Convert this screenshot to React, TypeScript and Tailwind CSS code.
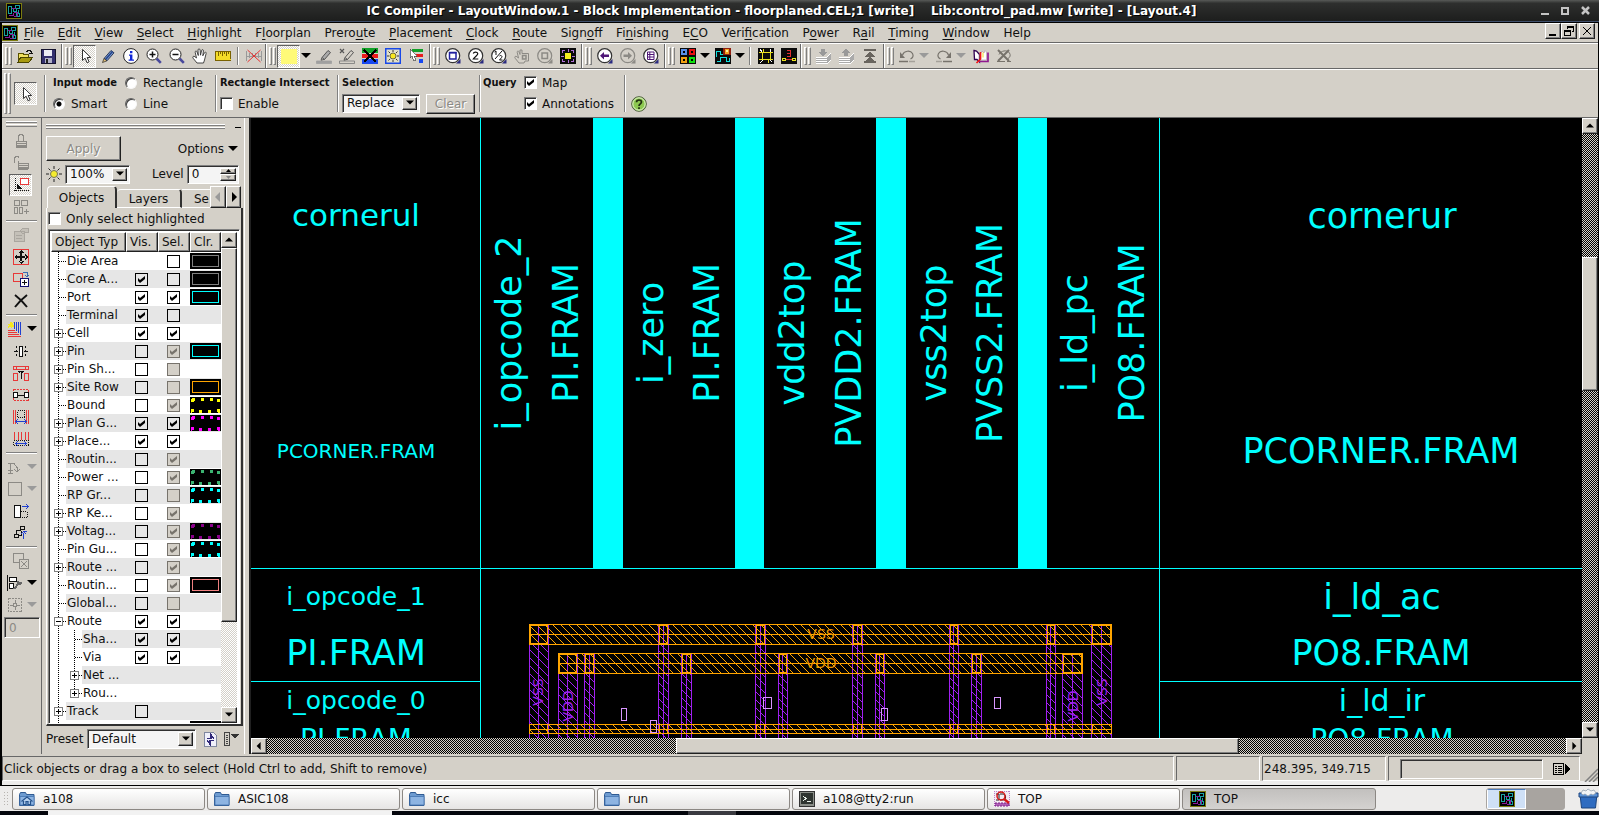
import React, { useId } from "react";

type Kids = { children?: React.ReactNode };

const raised =
  "border border-t-white border-l-white border-r-[#202020] border-b-[#202020] shadow-[inset_-1px_-1px_0_#808080] bg-[#d4d0c8]";
const sunken =
  "border border-t-[#808080] border-l-[#808080] border-r-white border-b-white shadow-[inset_1px_1px_0_#303030]";
const dither = "bg-[repeating-conic-gradient(#fff_0%_25%,#d4d0c8_0%_50%)] bg-[length:2px_2px]";
const darkDither = "bg-[repeating-conic-gradient(#000_0%_25%,#d4d0c8_0%_50%)] bg-[length:2px_2px]";
const pressed = "border border-t-[#606060] border-l-[#606060] border-r-white border-b-white";

const GREY = "#8c8a85";

function Ico({ children, soft }: Kids & { soft?: boolean }) {
  return (
    <svg
      viewBox="0 0 16 16"
      className="block h-4 w-4 shrink-0"
      shapeRendering={soft ? "auto" : "crispEdges"}
      fill="none"
      aria-hidden="true"
    >
      {children}
    </svg>
  );
}

function Tri({ dir = "down", color = "#000", small }: { dir?: "down" | "up" | "left" | "right"; color?: string; small?: boolean }) {
  const d = { down: "M0 2h10L5 7z", up: "M0 7h10L5 2z", left: "M7 0v10L2 5z", right: "M3 0v10l5-5z" }[dir];
  return (
    <svg viewBox="0 0 10 10" className={small ? "block h-[8px] w-[8px]" : "block h-[10px] w-[10px]"} fill={color} aria-hidden="true">
      <path d={d} />
    </svg>
  );
}

function ChipIcon() {
  return (
    <Ico>
      <path d="M0 0h16v16H0z" fill="#7c7c10" />
      <path d="M1 1h14v14H1z" fill="#000" />
      <path d="M2.500 3.500h3v7h-3zM9.500 2.500h4v3h-4zM7.500 5.500h3v3h-3zM12.500 6.500v3h-3M10.500 10.500h3v3h-3z" stroke="#18a0a0" />
      <path d="M5.500 5.500h4M7.500 9.500h4v3M3 12.500h4v-3M7.500 13.500h3" stroke="#8a1a9a" />
    </Ico>
  );
}

/* ---------- toolbar glyphs ---------- */

const CursorI = () => (
  <Ico soft>
    <path d="M5.500 1.500v11l2.600-2.300 2 4.600 2-1-2-4.300h3.600z" fill="#fff" stroke="#333" />
  </Ico>
);
const OpenI = () => (
  <Ico>
    <path d="M1 5h5v1h5v8H1z" fill="#f0e060" stroke="#5a5200" />
    <path d="M4 9h12l-4 5H1z" fill="#a89a10" stroke="#4a4400" />
    <path d="M9 3.500h1v-1h3v1h1v2M12 5.500h4" stroke="#111" />
  </Ico>
);
const SaveI = () => (
  <Ico>
    <path d="M1 1h14v14H1z" fill="#34306e" stroke="#15132e" />
    <path d="M4 2h8v6H4z" fill="#ececf4" />
    <path d="M5 10h7v5H5z" fill="#b0b0c8" />
    <path d="M6 11h2v4H6z" fill="#222" />
  </Ico>
);
const PencilI = () => (
  <Ico soft>
    <path d="M4 10.500l7-8 3 2.300-7 8z" fill="#7c9cd0" stroke="#1c2c50" strokeWidth=".9" />
    <path d="M5.500 11.500l7-8" stroke="#24448c" strokeWidth="1.500" />
    <path d="M4 10.500L2.500 14.500l4.500-1.700z" fill="#e6c27a" stroke="#222" strokeWidth=".7" />
  </Ico>
);
const InfoI = () => (
  <Ico soft>
    <circle cx="8" cy="8" r="7.400" fill="#fff" stroke="#222" />
    <path d="M7 3h2.400v2.200H7zM6 6.500h3.400v5H11v1.300H5.600v-1.300H7V7.800H6z" fill="#1026d8" />
  </Ico>
);
function Lens({ children, c = "#222", fill = "#fff", handle = "#4a4a9c" }: Kids & { c?: string; fill?: string; handle?: string }) {
  return (
    <Ico soft>
      <path d="M10.500 10.500l4.300 4.300" stroke={handle} strokeWidth="2.600" />
      <circle cx="6.500" cy="6.500" r="5.500" fill={fill} stroke={c} />
      {children}
    </Ico>
  );
}
function BigLens({ children, c = "#333", fill = "#fff", handle = "#2a2a80" }: Kids & { c?: string; fill?: string; handle?: string }) {
  return (
    <Ico soft>
      <path d="M11 15.500h4.500V11z" fill={handle} />
      <circle cx="7.700" cy="7.700" r="7" fill={fill} stroke={c} strokeWidth="1.200" />
      {children}
    </Ico>
  );
}
const HandI = ({ c = "#333", fill = "#fff" }: { c?: string; fill?: string }) => (
  <Ico soft>
    <path
      d="M5 15L1.200 10.300c-1.200-1.500.5-2.800 1.700-1.600L4.500 10 3.200 4.300c-.3-1.400 1.400-1.800 1.800-.5L6.300 7.500 6 2c0-1.500 2-1.500 2.100 0L8.500 7.200l1.100-4.700c.3-1.400 2-1 1.800.4L10.800 7.800l1.600-3c.7-1.300 2.200-.5 1.700.8L12.500 12 11.500 15z"
      fill={fill}
      stroke={c}
      strokeWidth=".9"
    />
  </Ico>
);
const RulerI = () => (
  <Ico>
    <path d="M0 3h16v10h-2v-1h-2v1H0z" fill="#f4dc28" />
    <path d="M0 12.500h16M.5 3v10M15.500 3v8M0 3.500h16M3.500 4v4M5.500 4v2M7.500 4v4M9.500 4v2M11.500 4v4M13.500 4v2" stroke="#7a6200" />
  </Ico>
);
const RulerOffI = () => (
  <Ico soft>
    <path d="M.5 3v10M3.500 5v5M6.500 5v5M9.500 5v5M12.500 5v5M15.500 3v10M1 8.500h14" stroke="#999" />
    <path d="M1.500 2l13 12M14.500 2l-13 12" stroke="#e83030" />
  </Ico>
);
const MarkI = ({ x }: { x?: boolean }) => (
  <Ico soft>
    <path d="M6 9.500l6-7 2.500 2-6 7z" fill={x ? "none" : "#aaa"} stroke="#555" />
    <path d="M6 9.500l-1 2.800 3.500-1" stroke="#555" />
    <path d="M.5 13h15v2.500H.5z" fill={x ? "none" : "#a0a0a0"} stroke={x ? "#777" : "#a0a0a0"} strokeWidth=".8" />
    {x && <path d="M1 1l4 4M5 1L1 5" stroke="#555" strokeWidth="1.200" />}
  </Ico>
);
const StripesXI = () => (
  <Ico>
    <path d="M0 0h16v5H0z" fill="#12a028" />
    <path d="M0 6h16v4H0z" fill="#e81c1c" />
    <path d="M0 11h16v5H0z" fill="#1848f0" />
    <path d="M2 2l12 12M14 2L2 14" stroke="#000" strokeWidth="2" />
  </Ico>
);
const SunBoxI = () => (
  <Ico soft>
    <path d="M.75.75h14.500v14.500H.75z" stroke="#1848e8" strokeWidth="1.500" fill="#e2e0c8" />
    <path d="M8 2v2M8 12v2M2 8h2M12 8h2M3.500 3.500l1.500 1.500M11 11l1.500 1.500M12.500 3.500L11 5M5 11l-1.500 1.500" stroke="#333" />
    <circle cx="8" cy="8" r="3" fill="#f8e820" stroke="#333" strokeWidth=".7" />
  </Ico>
);
const StripesCursorI = () => (
  <Ico>
    <path d="M4 1h11v3H4z" fill="#12a028" />
    <path d="M8 6h7v3H8z" fill="#e81c1c" />
    <path d="M11 11h4v4h-4z" fill="#1848f0" />
    <path d="M2 1v9l2-2 2 5 2-1-2-4h3z" fill="#fff" stroke="#444" strokeWidth=".7" />
  </Ico>
);
const FullFitI = () => (
  <Ico>
    <path d="M0 0h16v16H0z" fill="#0a0a0a" />
    <path d="M2.500 5v-2.500H5M11 2.500h2.500V5M13.500 11v2.500H11M5 13.500H2.500V11M8.500 1v3M8.500 12v3M1 8.500h3M12 8.500h3" stroke="#b070d8" />
    <path d="M5 5h6v6H5z" fill="#f4ec20" />
  </Ico>
);
const GridColorI = () => (
  <Ico>
    <path d="M0 0h16v16H0z" fill="#0a0a0a" />
    <path d="M1 1h6v6H1z" fill="#5890e8" />
    <path d="M9 1h6v6H9z" fill="#e81010" />
    <path d="M1 9h6v6H1z" fill="#f0a010" />
    <path d="M9 9h6v6H9z" fill="#10e010" />
    <path d="M3 3h2v2H3zM11 3h2v2h-2zM3 11h2v2H3zM11 11h2v2h-2z" fill="#000" />
  </Ico>
);
const RouteColorI = () => (
  <Ico>
    <path d="M0 0h16v16H0z" fill="#0a0a0a" />
    <path d="M1.500 9V3.500h4v3h3M1.500 13.500h4v-4h6v4h3v-4" stroke="#10e0e0" />
    <path d="M8 0h8v7H8z" fill="#902010" />
    <path d="M10 1h4v5h-4z" fill="#f0a020" />
    <path d="M11 2h2v2h-2z" fill="#fff4a0" />
  </Ico>
);
const VerifyAI = () => (
  <Ico>
    <path d="M0 0h16v16H0z" fill="#0a0a0a" />
    <path d="M1 4.500h3v7H1M15 4.500h-3v7h3M4 4.500h8M4 11.500h8M5.500 1v3M10.500 12v3" stroke="#e8e020" />
    <path d="M2 1l2 3M13 1l-1 3M2 15l3-3M14 14l-2-2" stroke="#fff" />
  </Ico>
);
const VerifyBI = () => (
  <Ico>
    <path d="M0 0h16v16H0z" fill="#0a0a0a" />
    <path d="M6 2.500h3v6H6M6 5.500h3" stroke="#e03030" />
    <path d="M4 11.500h8" stroke="#e03030" />
    <path d="M1.500 10.500h3v2h-3zM11.500 10.500h3v2h-3z" stroke="#e8e020" />
  </Ico>
);
const LayersI = ({ up }: { up?: boolean }) => (
  <Ico>
    <path d="M0 9.500h11l4-4M0 11.500h11l4-4M0 13.500h11l4-4M0 15.500h11l4-4" stroke="#fff" />
    <path d="M0 10.500h11l4-4M0 12.500h11l4-4M0 14.500h11l4-4" stroke="#aaa" />
    <path d={up ? "M5 8V5H2l5-4 5 4H9v3z" : "M5 1h4v3h3L7 8 2 4h3z"} fill="#999" />
  </Ico>
);
const TopI = () => (
  <Ico>
    <path d="M2 1h12v2H2zM2 9l6-5 6 5zM2 14l6-5 6 5zM2 13h12v2H2z" fill="#68645e" />
  </Ico>
);
const UndoI = ({ flip }: { flip?: boolean }) => (
  <svg viewBox="0 0 16 16" className={flip ? "block h-4 w-4 -scale-x-100" : "block h-4 w-4"} fill="none" aria-hidden="true">
    <path d="M3.500 7c1.500-4.500 8-5 10-1.500 1.300 2.300.3 4.500-2 5.500" stroke="#77736c" strokeWidth="1.200" />
    <path d="M1 4v6h5z" fill="#77736c" />
    <path d="M0 13.500h9M10.500 13.500h1M12.500 13.500h1M14.500 13.500h1" stroke="#77736c" strokeWidth="1.500" />
  </svg>
);
const BookI = () => (
  <Ico soft>
    <path d="M1 2.500l2.500.5 3 3.500V14L4 11.500H1.500z" fill="#fff" stroke="#300050" strokeWidth="1.300" />
    <path d="M7 6.500L9 3l2 2 1-2.500 1.500 1.500v8H7z" fill="#fff" stroke="#b8a8b8" strokeWidth=".8" />
    <path d="M6 13.500h9V4.500" stroke="#901890" strokeWidth="1.700" />
    <path d="M7.500 4v7l-4 4" stroke="#f01818" strokeWidth="1.700" />
    <path d="M10 4.500v5" stroke="#f0e020" />
  </Ico>
);
const UndoOffI = () => (
  <Ico soft>
    <path d="M3 6.500c2-4 8-5 10.500-1.500 1.300 2 .7 4.500-1.500 5.500M1 13.500h8M11 13.500h4" stroke="#77736c" />
    <path d="M2 2l11 11M13 2L2 13" stroke="#77736c" strokeWidth="2" />
  </Ico>
);

/* ---------- bars ---------- */

const Handle = () => (
  <span className="mr-px ml-[2px] flex gap-px self-stretch py-[3px]">
    <i className="w-[3px] border border-t-white border-l-white border-r-[#808080] border-b-[#808080]" />
    <i className="w-[3px] border border-t-white border-l-white border-r-[#808080] border-b-[#808080]" />
  </span>
);
const Group = ({ children, last }: Kids & { last?: boolean }) => (
  <div className={last ? "flex items-center border-l border-white" : "flex items-center border-r border-l border-r-[#686868] border-l-white"}>
    <Handle />
    {children}
  </div>
);
const Tool = ({ children, label, on }: Kids & { label: string; on?: boolean }) => (
  <button
    type="button"
    aria-label={label}
    className={on ? `grid h-[23px] w-[23px] place-items-center ${pressed} ${dither}` : "grid h-[23px] w-[23px] place-items-center"}
  >
    {children}
  </button>
);
const Drop = ({ label, off }: { label: string; off?: boolean }) => (
  <button type="button" aria-label={label} className="grid h-[23px] w-3 place-items-center">
    <Tri color={off ? "#9a9a9a" : "#000"} />
  </button>
);
const Gap = () => <i className="w-[2px]" />;
const Sep = () => <i className="mx-[3px] h-[18px] w-[2px] border-l border-[#808080] border-r border-r-white" />;
const TallSep = () => <i className="my-[5px] w-[2px] self-stretch border-l border-[#808080] border-r border-r-white" />;
const GroupTitle = ({ children }: Kids) => (
  <b className="font-['DejaVu_Sans_Condensed','DejaVu_Sans',sans-serif] text-[11px] whitespace-nowrap">{children}</b>
);

const MENUS: [string, number][] = [
  ["File", 0], ["Edit", 0], ["View", 0], ["Select", 0], ["Highlight", 0], ["Floorplan", 1], ["Preroute", 5],
  ["Placement", 0], ["Clock", 0], ["Route", 0], ["Signoff", 4], ["Finishing", 2], ["ECO", 1], ["Verification", 4],
  ["Power", 1], ["Rail", 1], ["Timing", 0], ["Window", 0], ["Help", -1],
];

function Check({
  label,
  checked,
  grey,
  flat,
  text,
}: {
  label: string;
  checked?: boolean;
  grey?: boolean;
  flat?: "clear" | "grey";
  text?: boolean;
}) {
  const look = flat
    ? flat === "grey"
      ? "border border-[#77736c] bg-[#d4d0c8]"
      : "border border-black bg-transparent"
    : `${sunken} bg-white`;
  return (
    <label className="flex items-center gap-[5px]">
      <span className="grid h-[13px] w-[13px] shrink-0">
        <input
          type="checkbox"
          aria-label={label}
          defaultChecked={checked}
          className={`peer [grid-area:1/1] m-0 h-[13px] w-[13px] appearance-none ${look}`}
        />
        <svg viewBox="0 0 13 13" className="pointer-events-none [grid-area:1/1] hidden h-[13px] w-[13px] peer-checked:block" fill={grey ? "#77736c" : "#000"} aria-hidden="true">
          <path d="M3 5l2 2 5-4v3l-5 4-2-2z" />
        </svg>
      </span>
      {text && label}
    </label>
  );
}

function Radio({ label, checked }: { label: string; checked?: boolean }) {
  return (
    <label className="flex items-center gap-[6px]">
      <input
        type="radio"
        name="input-mode"
        defaultChecked={checked}
        className="m-0 h-3 w-3 appearance-none rounded-full border border-t-[#606060] border-l-[#606060] border-r-[#f8f8f8] border-b-[#f8f8f8] bg-white shadow-[inset_1px_1px_0_#404040] checked:bg-[radial-gradient(circle,#000_0_2px,#fff_3px)]"
      />
      {label}
    </label>
  );
}

function Combo({ label, value, className }: { label: string; value: string; className: string }) {
  return (
    <span className={`grid bg-[#f4f4f4] p-[2px] ${sunken} ${className}`}>
      <select aria-label={label} defaultValue={value} className="[grid-area:1/1] w-full min-w-0 appearance-none bg-transparent pl-[2px] leading-none outline-none">
        <option>{value}</option>
      </select>
      <span className={`pointer-events-none [grid-area:1/1] grid w-[15px] place-items-center justify-self-end ${raised}`}>
        <Tri small />
      </span>
    </span>
  );
}

function ToolRows() {
  return (
    <>
      <div className="flex h-[26px] border-t border-b border-t-white border-b-[#686868]">
        <Group>
          <Tool label="Open"><OpenI /></Tool>
          <Tool label="Save"><SaveI /></Tool>
          <Gap />
        </Group>
        <Group>
          <Tool label="Selection tool" on><CursorI /></Tool>
          <Tool label="Edit tool"><PencilI /></Tool>
          <Tool label="Query tool"><InfoI /></Tool>
          <Tool label="Zoom in"><Lens><path d="M3.500 6.500h6M6.500 3.500v6" stroke="#111" strokeWidth="1.500" /></Lens></Tool>
          <Tool label="Zoom out"><Lens><path d="M3.500 6.500h6" stroke="#111" strokeWidth="1.500" /></Lens></Tool>
          <Tool label="Pan"><HandI /></Tool>
          <Tool label="Ruler"><RulerI /></Tool>
          <Sep />
          <Tool label="Clear rulers"><RulerOffI /></Tool>
        </Group>
        <Group>
          <Tool label="Highlight color" on><span className="h-[15px] w-4 bg-[#fffa78]" /></Tool>
          <Drop label="Choose color" />
          <Tool label="Highlight selected"><MarkI /></Tool>
          <Tool label="Clear highlight"><MarkI x /></Tool>
          <Tool label="Clear all highlights"><StripesXI /></Tool>
          <Tool label="Brightness"><SunBoxI /></Tool>
          <Tool label="Select highlighted"><StripesCursorI /></Tool>
          <Gap />
        </Group>
        <Group>
          <Tool label="Zoom fit"><BigLens><path d="M4.500 4.500h6.500v6.500H4.500z" stroke="#2020a0" strokeWidth="1.500" /><path d="M4 4h7.500v1.500H4z" fill="#2020a0" /></BigLens></Tool>
          <Tool label="Zoom out 2x"><BigLens><path d="M5.300 5.500c.5-2 4.500-2 4.500.3 0 1.500-3 3-4.500 5.200h5" stroke="#111" strokeWidth="1.200" /></BigLens></Tool>
          <Tool label="Zoom in 2x"><BigLens><path d="M3.500 4l1.500-1v4M11 3l-7 8M8.500 8c1-1.300 3.500 0 2 1.700L8.500 12h3" stroke="#111" /></BigLens></Tool>
          <Tool label="Pan to selection">
            <Ico soft>
              <path d="M5 15L1.200 10.300c-1.200-1.500.5-2.800 1.700-1.600L4.500 10 3.200 4.300c-.3-1.400 1.400-1.800 1.800-.5L6 6.500V2h2v3.500h6.500V13H11l-1 2z" stroke={GREY} />
              <path d="M8.500 7.500h3.500v3.500H8.500z" stroke={GREY} strokeWidth="1.500" />
            </Ico>
          </Tool>
          <Tool label="Zoom to selection"><BigLens c={GREY} fill="none" handle={GREY}><path d="M5 5h5.500v5.500H5z" stroke={GREY} strokeWidth="1.500" /></BigLens></Tool>
          <Tool label="Full view"><FullFitI /></Tool>
          <Gap />
        </Group>
        <Group>
          <Tool label="Previous view"><BigLens><path d="M3 7.700l4-3.700v2.500h5v2.400H7v2.500z" fill="#501878" /></BigLens></Tool>
          <Tool label="Next view"><BigLens c={GREY} fill="none" handle={GREY}><path d="M12 7.700L8 4v2.500H3.500v2.400H8v2.500z" fill={GREY} /></BigLens></Tool>
          <Tool label="View list"><BigLens><path d="M4.500 4h6.500v7.500H4.500zM4.500 6.500H11M4.500 9H11M6.800 4v7.500" stroke="#501878" /></BigLens></Tool>
          <Gap />
        </Group>
        <Group>
          <Tool label="Visual mode"><GridColorI /></Tool>
          <Drop label="Visual mode menu" />
          <Tool label="Map mode"><RouteColorI /></Tool>
          <Drop label="Map mode menu" />
          <Sep />
          <Tool label="Errors"><VerifyAI /></Tool>
          <Tool label="Hierarchy"><VerifyBI /></Tool>
        </Group>
        <Group>
          <Tool label="Push down"><LayersI /></Tool>
          <Tool label="Pop up"><LayersI up /></Tool>
          <Tool label="Top level"><TopI /></Tool>
          <Gap />
        </Group>
        <Group last>
          <Tool label="Undo"><UndoI /></Tool>
          <Drop label="Undo list" off />
          <Gap />
          <Tool label="Redo"><UndoI flip /></Tool>
          <Drop label="Redo list" off />
          <Gap />
          <Tool label="Report"><BookI /></Tool>
          <Tool label="Clear undo"><UndoOffI /></Tool>
        </Group>
      </div>

      <div className="flex h-[49px] border-t border-b border-t-white border-b-[#686868]">
        <Handle />
        <span className="ml-[2px] flex items-center">
          <Tool label="Selection tool options" on><CursorI /></Tool>
        </span>
        <span className="ml-[7px] flex"><TallSep /></span>
        <div className="ml-[7px] grid grid-cols-[72px_90px] grid-rows-[21px_21px] items-center pt-[2px]">
          <GroupTitle>Input mode</GroupTitle>
          <Radio label="Rectangle" />
          <Radio label="Smart" checked />
          <Radio label="Line" />
        </div>
        <TallSep />
        <div className="ml-[3px] grid w-[117px] grid-rows-[21px_21px] items-center pt-[2px]">
          <GroupTitle>Rectangle Intersect</GroupTitle>
          <Check label="Enable" text />
        </div>
        <TallSep />
        <div className="ml-[3px] grid w-[137px] grid-rows-[21px_21px] items-center pt-[2px]">
          <GroupTitle>Selection</GroupTitle>
          <span className="flex gap-[6px]">
            <Combo label="Selection mode" value="Replace" className="h-[19px] w-[78px]" />
            <button type="button" className={`h-5 w-[49px] text-[#8c8a85] [text-shadow:1px_1px_0_#fff] ${raised}`}>Clear</button>
          </span>
        </div>
        <TallSep />
        <div className="ml-[2px] grid w-[141px] grid-cols-[41px_1fr] grid-rows-[21px_21px] items-center pt-[2px]">
          <GroupTitle>Query</GroupTitle>
          <Check label="Map" checked text />
          <span />
          <Check label="Annotations" checked text />
        </div>
        <TallSep />
        <button type="button" aria-label="Help" className="mt-[26px] ml-[5px] h-4 w-4">
          <Ico soft>
            <circle cx="8" cy="8" r="7.300" fill="#8cc850" stroke="#4a5a3a" />
            <circle cx="8" cy="8" r="6.200" stroke="#e4f4d0" />
            <path d="M5.500 6.300c0-3 5-3 5-.3C10.500 8 8 7.800 8 10M8 11.300v1.600" stroke="#203010" strokeWidth="1.700" />
          </Ico>
        </button>
      </div>
    </>
  );
}

/* ---------- left edit strip ---------- */

const R = "#e83838";
const B = "#2040d0";
const K = "#111";

type Side = { label: string; icon: React.ReactNode; drop?: "on" | "off"; on?: boolean } | null;
const SIDE: Side[] = [
  { label: "Lock", icon: <Ico><path d="M5.500 8V2.500h1v-1h3v1h1V8M3 8.500h10v5H3zM3 10.500h10M3 12h11M3 14.500h11" stroke={GREY} /></Ico> },
  { label: "Unlock", icon: <Ico><path d="M1.500 8V2.500h1v-1h3v1M5.500 8V6M5 8.500h10v5H5zM5 10.500h10M5 12h10M5 14.500h10" stroke={GREY} /></Ico> },
  { label: "Snap", on: true, icon: <Ico><path d="M2.500 1v14M1 13.500h15" stroke={K} strokeDasharray="1 1" /><path d="M7.500 1.500h8v6h-8z" fill="#fff" stroke={R} strokeWidth="1.500" /><path d="M4 7v5h5z" fill={K} /></Ico> },
  { label: "Align grid", icon: <Ico><path d="M1.500 1.500h5v5h-5zM8.500 1.500h6v5h-6zM1.500 8.500h3v6h-3zM6.500 8.500h3v6h-3zM11 12.500h5M13.500 10v5" stroke={GREY} /></Ico> },
  null,
  { label: "Properties", icon: <Ico><path d="M1.500 4.500h10v10h-10zM3 8.500h6M3 11.500h6M7 4l3-3h5v4h-3l-2 2z" stroke="#aaa69f" fill="#c4c0b8" /></Ico> },
  { label: "Move", icon: <Ico><path d="M.5.5h15v15H.5z" stroke={R} /><path d="M8 1l3 3H5zM8 15l3-3H5zM1 8l3-3v6zM15 8l-3-3v6zM7 3h2v10H7zM3 7h10v2H3z" fill={K} /></Ico> },
  { label: "Copy", icon: <Ico><path d="M.5 2.500h9v8h-9z" stroke={R} /><path d="M7.500 7.500h8v8h-8z" fill="#fff" stroke="#101070" /><path d="M9 11.500h5M11.500 9v5" stroke={K} /><path d="M10 1.500h4v4M12 4l2 2 2-2" stroke="#3a6ab0" /></Ico> },
  { label: "Delete", icon: <Ico soft><path d="M2 2c4 3 8 7 12 12M14 2C10 5 6 9 2 14" stroke={K} strokeWidth="2" /></Ico> },
  null,
  { label: "Create route", drop: "on", icon: <Ico><path d="M7.500 1v7M9.500 1v9M11.500 1v11M13.500 1v13" stroke={B} /><path d="M1 9.500h7M1 11.500h9M1 13.500h11M1 15.500h13" stroke={R} /><path d="M4 0l1 2 2-1-1 3 2 1-3 1v2L3 6 1 7l1-3-2-1h3z" fill="#f4e820" /></Ico> },
  { label: "Stretch", icon: <Ico><path d="M6.500 3.500h3v10h-3z" stroke={K} fill="#fff" /><path d="M3.500 3v2M3.500 7v2M3.500 11v2M12.500 3v2M12.500 7v2M12.500 11v2M1 8.500h4M11 8.500h4" stroke={K} /></Ico> },
  { label: "Split", icon: <Ico><path d="M.5 1.500h15v3H.5zM3.500 1v3M12.500 1v3M.5 8.500h4v7h-4zM11.500 8.500h4v7h-4z" stroke={R} strokeWidth="1.300" /><path d="M5 6.500h6M8 6v8M6 8l2-2 2 2" stroke={K} /></Ico> },
  { label: "Space", icon: <Ico><path d="M.5 2.500h15v11H.5z" stroke={R} strokeDasharray="2 1" /><path d="M.5 5.500h4v5h-4zM11.500 5.500h4v5h-4z" fill="#fff" stroke={K} /><path d="M5 8.500h6" stroke={K} /></Ico> },
  { label: "Spread", icon: <Ico><path d="M.5 1v14M2.500 1v14M13.500 1v14M15.500 1v14" stroke={R} /><path d="M4.500 1.500h7v7h-7z" stroke={K} strokeDasharray="1 1" /><path d="M3 12.500h10M5 10l-2 2.500L5 15M11 10l2 2.500L11 15" stroke={B} /></Ico> },
  { label: "Distribute", icon: <Ico><path d="M1.500 1v8M5 1v8M8.500 1v8M12 1v8M15 1v8" stroke={R} /><path d="M.5 9.500h15v5H.5z" stroke={K} strokeDasharray="1 1" /><path d="M3 12.500h10M5 10l-2 2.500L5 15M11 10l2 2.500L11 15" stroke={B} /></Ico> },
  null,
  { label: "Rotate", drop: "off", icon: <Ico><path d="M1 4.500h6l3 4v4M1 11.500h5M1 14.500h5M7 10l3 3 3-3M3.500 5v9" stroke={GREY} /></Ico> },
  { label: "Shape", drop: "off", icon: <Ico><path d="M1.500 1.500h13v13h-13z" stroke={GREY} /></Ico> },
  { label: "Resize", icon: <Ico><path d="M1.500 2.500h6v12h-6z" fill="#fff" stroke={K} /><path d="M8 8.500h6v6H8" stroke={K} strokeDasharray="1 1" /><path d="M9 3.500h6M13 1l2.500 2.500L13 6" stroke={B} /></Ico> },
  { label: "Reshape", icon: <Ico><path d="M7.500 1.500h4v3h-4zM1.500 9.500h4v3h-4zM3.500 9V5.500h4M5 10.500h3v-5" stroke={K} /><path d="M10.500 14V8M13.500 6.500h-4M8 9l2.500-2.500L13 9" stroke={B} /></Ico> },
  null,
  { label: "Remove overlap", icon: <Ico><path d="M.5.5h10v9H.5z" stroke={GREY} /><path d="M6.500 6.500h9v9h-9z" fill="#d4d0c8" stroke={GREY} /><path d="M8 8l6 6M14 8l-6 6" stroke={GREY} /></Ico> },
  { label: "Align", drop: "on", icon: <Ico><path d="M.5 0v16M2.500 2.500h7v4h-7zM2.500 8.500h4v5h-4z" stroke={K} fill="#fff" /><path d="M7 14l5-6M11 6l1 3 3-1" stroke="#666" strokeWidth="2" /></Ico> },
  { label: "Cluster", drop: "off", icon: <Ico><path d="M1.500 1.500h13v13h-13z" stroke={GREY} strokeDasharray="2 1" /><path d="M6.500 6.500h3v3h-3zM8 3v3M8 10v3M3 8.500h3M10 8.500h3" stroke={GREY} /></Ico> },
];

function SideBar() {
  return (
    <div className="flex w-[40px] shrink-0 flex-col border-r border-[#686868]">
      <span className="mx-1 mt-[3px] mb-[3px] flex h-[6px] flex-col gap-px">
        <i className="h-[2px] border-t border-b border-t-white border-b-[#808080]" />
        <i className="h-[3px] border-t border-b border-t-white border-b-[#808080]" />
      </span>
      {SIDE.map((s, i) =>
        s ? (
          <span key={i} className={s.drop ? "flex h-[22px] items-center gap-px pl-px" : "flex h-[22px] items-center pl-[7px]"}>
            <button
              type="button"
              aria-label={s.label}
              className={
                s.on
                  ? `grid h-[22px] w-[23px] place-items-center ${pressed} ${dither}`
                  : "grid h-[22px] w-[23px] place-items-center"
              }
            >
              {s.icon}
            </button>
            {s.drop && <Tri color={s.drop === "off" ? "#9a9a9a" : "#000"} />}
          </span>
        ) : (
          <i key={i} className="mx-1 my-[2px] h-[2px] border-t border-b border-t-[#808080] border-b-white" />
        ),
      )}
      <input aria-label="Offset" defaultValue="0" disabled className={`mt-px ml-[2px] h-[21px] w-[36px] px-1 text-[#8c8a85] ${sunken}`} />
    </div>
  );
}

/* ---------- object panel ---------- */

type Box = "y" | "n" | "gy" | "gn" | "";
type Row = { n: string; v: Box; s: Box; c?: string; dots?: boolean; t?: "+" | "-"; lv?: number };
const ROWS: Row[] = [
  { n: "Die Area", v: "", s: "n", c: "#808080" },
  { n: "Core A...", v: "y", s: "n", c: "#808080" },
  { n: "Port", v: "y", s: "y", c: "#00ffff" },
  { n: "Terminal", v: "y", s: "n" },
  { n: "Cell", v: "y", s: "y", t: "+" },
  { n: "Pin", v: "n", s: "gy", c: "#00ffff", t: "+" },
  { n: "Pin Sh...", v: "n", s: "gn", t: "+" },
  { n: "Site Row", v: "n", s: "gn", c: "#ffa500", t: "+" },
  { n: "Bound", v: "n", s: "gy", c: "#ffff00", dots: true },
  { n: "Plan G...", v: "y", s: "y", c: "#ff00ff", dots: true, t: "+" },
  { n: "Place...", v: "y", s: "y", t: "+" },
  { n: "Routin...", v: "n", s: "gy" },
  { n: "Power ...", v: "n", s: "gy", c: "#3cb371", dots: true },
  { n: "RP Gr...", v: "n", s: "gn", c: "#00ffff", dots: true },
  { n: "RP Ke...", v: "n", s: "gy", t: "+" },
  { n: "Voltag...", v: "n", s: "gy", c: "#8b008b", dots: true, t: "+" },
  { n: "Pin Gu...", v: "n", s: "gy", c: "#00ffff", dots: true },
  { n: "Route ...", v: "n", s: "gy", t: "+" },
  { n: "Routin...", v: "n", s: "gy", c: "#f08080" },
  { n: "Global...", v: "n", s: "gn" },
  { n: "Route", v: "y", s: "y", t: "-" },
  { n: "Sha...", v: "y", s: "y", lv: 1 },
  { n: "Via", v: "y", s: "y", lv: 1 },
  { n: "Net ...", v: "", s: "", t: "+", lv: 1 },
  { n: "Rou...", v: "", s: "", t: "+", lv: 1 },
  { n: "Track", v: "n", s: "", t: "+" },
];

function Swatch({ c, dots }: { c: string; dots?: boolean }) {
  return (
    <svg viewBox="0 0 31 18" className="block h-[18px] w-[31px]" shapeRendering="crispEdges" fill="none" aria-hidden="true">
      <path d="M0 1h31v16H0z" fill="#000" />
      {dots ? (
        <path d="M1 3h1V2h3v3H4v1H1zM11 2h3v3h-3zM20 2h3v3h-3zM27 3h3v3h-3zM1 13h3v3H2v1H1zM9 14h3v3H9zM18 14h3v3h-3zM27 13h3v4h-2v-1h-1z" fill={c} />
      ) : (
        <path d="M2.500 3.500h26v11h-26z" stroke={c} />
      )}
    </svg>
  );
}

function Branch({ t, lv, last }: { t?: "+" | "-"; lv?: number; last?: boolean }) {
  const x = lv ? 23.5 : 7.5;
  const w = lv ? 31 : 15;
  return (
    <svg viewBox={`0 0 ${w} 18`} width={w} height={18} className="block shrink-0" shapeRendering="crispEdges" fill="none" aria-hidden="true">
      <path d="M7.500 0v18" stroke="#000" strokeDasharray="1 1" />
      {lv && <path d={last ? "M23.500 0v9" : "M23.500 0v18"} stroke="#000" strokeDasharray="1 1" />}
      <path d={`M${x} 9.500h7`} stroke="#000" strokeDasharray="1 1" />
      {t && (
        <>
          <path d={`M${x - 4} 5.500h8v8h-8z`} fill="#fff" stroke="#808080" />
          <path d={t === "+" ? `M${x - 2.5} 9.500h5M${x} 7v5` : `M${x - 2.5} 9.500h5`} stroke="#000" />
        </>
      )}
    </svg>
  );
}

function Cell({ b, name }: { b: Box; name: string }) {
  return (
    <span className="flex h-[18px] items-center justify-center pt-px pr-px">
      {b && <Check label={name} checked={b === "y" || b === "gy"} grey={b === "gy"} flat={b[0] === "g" ? "grey" : "clear"} />}
    </span>
  );
}

function ObjectPanel() {
  const levelId = useId();
  const th = `h-5 overflow-hidden p-0 pl-[3px] text-left font-normal whitespace-nowrap ${raised}`;
  return (
    <div className="flex w-[209px] shrink-0 flex-col border-r-2 border-[#202020] shadow-[inset_-4px_0_0_#d4d0c8,inset_-5px_0_0_#fff]">
      <div className="flex h-[18px] items-start pt-[6px] pl-1">
        <span className="flex w-[179px] flex-col gap-px">
          <i className="h-[2px] border-t border-b border-t-white border-b-[#808080]" />
          <i className="h-[2px] border-t border-b border-t-white border-b-[#808080]" />
        </span>
        <i className="mt-[3px] ml-[10px] h-px w-[6px] bg-black" />
      </div>
      <div className="flex h-[25px] items-center justify-between pr-[11px] pl-1">
        <button type="button" className={`h-[25px] w-[75px] text-[#8c8a85] [text-shadow:1px_1px_0_#fff] ${raised}`}>Apply</button>
        <button type="button" className="flex items-center gap-1">Options <Tri /></button>
      </div>
      <div className="mt-[3px] flex h-5 items-center pl-1">
        <Ico soft>
          <path d="M8 0v3M8 13v3M0 8h3M13 8h3M2.500 2.500l2 2M13.500 2.500l-2 2M2.500 13.500l2-2M13.500 13.500l-2-2" stroke="#222" />
          <circle cx="8" cy="8" r="3.500" fill="#f4ec30" stroke="#555" strokeWidth=".8" />
        </Ico>
        <Combo label="Brightness" value="100%" className="ml-[3px] h-[19px] w-[65px]" />
        <label htmlFor={levelId} className="ml-[22px]">Level</label>
        <span className={`ml-[3px] flex h-[19px] w-[52px] bg-[#f4f4f4] p-[2px] ${sunken}`}>
          <input id={levelId} defaultValue="0" className="w-8 min-w-0 bg-transparent pl-[2px] outline-none" />
          <span className="flex w-4 flex-col">
            <button type="button" aria-label="Level up" className={`grid h-[8px] place-items-center ${raised}`}><svg viewBox="0 0 5 3" className="h-[3px] w-[5px]"><path d="M0 3h5L2.500 0z" /></svg></button>
            <button type="button" aria-label="Level down" className={`grid h-[7px] place-items-center ${raised}`}><svg viewBox="0 0 5 3" className="h-[3px] w-[5px]" fill="#888"><path d="M0 0h5L2.500 3z" /></svg></button>
          </span>
        </span>
      </div>
      <div className="mr-[7px] ml-[5px] flex h-6 items-end pt-[2px]">
        <button type="button" className="h-[22px] w-[70px] rounded-t-sm border-t border-r-2 border-l border-t-white border-r-[#303030] border-l-white">Objects</button>
        <button type="button" className="h-[19px] w-[65px] rounded-t-sm border-t border-r-2 border-b border-t-white border-r-[#303030] border-b-white">Layers</button>
        <button type="button" className="h-[19px] w-[28px] overflow-hidden border-t border-b border-white pl-[12px] text-left">Se</button>
        <button type="button" aria-label="Previous tabs" className={`grid h-[22px] w-4 place-items-center ${raised}`}><Tri dir="left" color="#9a9a9a" /></button>
        <button type="button" aria-label="Next tabs" className={`grid h-[22px] w-[15px] place-items-center ${raised}`}><Tri dir="right" /></button>
      </div>
      <div className="mr-[6px] ml-1 flex min-h-0 flex-1 flex-col border-r-2 border-b-2 border-l border-r-[#303030] border-b-[#303030] border-l-white">
        <div className="flex h-[21px] items-center pl-px">
          <Check label="Only select highlighted" text />
        </div>
        <div className={`mx-px flex min-h-0 flex-1 bg-white pt-[2px] pr-[2px] pl-[2px] ${sunken}`}>
          <div className="w-[170px] overflow-hidden">
            <table className="w-[170px] table-fixed border-separate border-spacing-0">
              <colgroup>
                <col className="w-[75px]" />
                <col className="w-8" />
                <col className="w-8" />
                <col className="w-[31px]" />
              </colgroup>
              <thead>
                <tr>
                  <th className={th}>Object Typ</th>
                  <th className={th}>Vis.</th>
                  <th className={th}>Sel.</th>
                  <th className={th}>Clr.</th>
                </tr>
              </thead>
              <tbody>
                {ROWS.map((r, i) => {
                  const bg = i % 2 ? "bg-[#e6e6e6]" : "";
                  return (
                    <tr key={i} className="h-[18px]">
                      <td className="p-0">
                        <span className="flex h-[18px]">
                          <Branch t={r.t} lv={r.lv} last={i === 24} />
                          <span className={`min-w-0 flex-1 overflow-hidden pl-px leading-[18px] whitespace-nowrap ${bg}`}>{r.n}</span>
                        </span>
                      </td>
                      <td className={`p-0 ${bg}`}><Cell b={r.v} name={`${r.n} visible`} /></td>
                      <td className={`p-0 ${bg}`}><Cell b={r.s} name={`${r.n} selectable`} /></td>
                      <td className={`p-0 ${bg}`}>{r.c && <Swatch c={r.c} dots={r.dots} />}</td>
                    </tr>
                  );
                })}
                <tr>
                  <td className="p-0"><Branch /></td>
                  <td className="p-0" />
                  <td className="p-0" />
                  <td className="p-0"><Swatch c="#808080" /></td>
                </tr>
              </tbody>
            </table>
          </div>
          <div className={`flex w-4 shrink-0 flex-col ${dither}`}>
            <button type="button" aria-label="Scroll up" className={`grid h-4 place-items-center ${raised}`}><Tri dir="up" small /></button>
            <span className={`h-[374px] ${raised}`} />
            <span className="flex-1" />
            <button type="button" aria-label="Scroll down" className={`grid h-4 place-items-center ${raised}`}><Tri small /></button>
          </div>
        </div>
      </div>
      <div className="flex h-[28px] items-center pb-[2px] pl-1">
        <span className="w-[41px]">Preset</span>
        <Combo label="Preset" value="Default" className="h-5 w-[109px]" />
        <button type="button" aria-label="Reload preset" className="ml-[6px]">
          <Ico><path d="M2.500 1.500h9l3 3v11h-12z" fill="#f0f0fa" stroke="#8088a0" /><path d="M5 7.500h4V4l3 3.500M12 9.500H8V13l-3-3.500" stroke="#302878" strokeWidth="1.500" /></Ico>
        </button>
        <button type="button" aria-label="Preset menu" className="ml-[5px] flex items-center">
          <Ico><path d="M1.500 1.500h5v13h-5zM3 4.500h2M3 6.500h2M3 8.500h2M3 10.500h2M3 12.500h2" stroke="#444" /><path d="M8 3h8l-4 5z" fill="#333" /></Ico>
        </button>
      </div>
    </div>
  );
}

/* ---------- layout canvas ---------- */

type Lbl = [string, number, number, number];
const H_LABELS: Lbl[] = [
  ["cornerul", 356, 226, 31],
  ["PCORNER.FRAM", 356, 458, 20],
  ["cornerur", 1382, 228, 35],
  ["PCORNER.FRAM", 1381, 463, 35],
  ["i_opcode_1", 356, 605, 25],
  ["PI.FRAM", 356, 665, 35],
  ["i_opcode_0", 356, 709, 25],
  ["PI.FRAM", 356, 749, 28],
  ["i_ld_ac", 1382, 609, 35],
  ["PO8.FRAM", 1381, 665, 35],
  ["i_ld_ir", 1382, 711, 30],
  ["PO8.FRAM", 1382, 749, 28],
];
const V_LABELS: [string, number][] = [
  ["i_opcode_2", 521], ["PI.FRAM", 578], ["i_zero", 663], ["PI.FRAM", 719], ["vdd2top", 804],
  ["PVDD2.FRAM", 861], ["vss2top", 946], ["PVSS2.FRAM", 1002], ["i_ld_pc", 1087], ["PO8.FRAM", 1144],
];
const PADS: [number, number][] = [[593, 30], [735, 29], [876, 30], [1018, 29]];
const SS_STRAPS: [number, number][] = [[658, 10], [755, 10], [852, 10], [949, 9], [1046, 9]];
const DD_STRAPS: [number, number][] = [[584, 10], [681, 10], [778, 9], [875, 9], [971, 10]];
const CELLS: [number, number, number, number][] = [
  [621, 708, 5, 12], [650, 720, 6, 12], [763, 697, 8, 11], [881, 708, 6, 12], [994, 697, 6, 11],
];

function Metal({ x, y, w, h, color, fill, vert }: { x: number; y: number; w: number; h: number; color: string; fill: string; vert?: boolean }) {
  const mid = vert ? `M${x + Math.floor(w / 2) + 0.5} ${y}v${h}` : `M${x} ${y + Math.ceil(h / 2) + 0.5}h${w}`;
  return (
    <g stroke={color}>
      <rect x={x + 0.5} y={y + 0.5} width={w} height={h} fill={`url(#${fill})`} />
      <path d={mid} />
    </g>
  );
}

function Canvas() {
  const P = "#a020f0";
  const O = "#ffa500";
  return (
    <svg
      viewBox="251 118 1331 620"
      width={1331}
      height={620}
      className="block max-w-none shrink-0"
      shapeRendering="crispEdges"
      fontFamily="'DejaVu Sans', sans-serif"
      textAnchor="middle"
      fill="none"
    >
      <defs>
        <pattern id="hatchO" width="8" height="8" patternUnits="userSpaceOnUse">
          <path d="M0 0h1v1h1v1h1v1h1v1h1v1h1v1h1v1h1v1H7V7H6V6H5V5H4V4H3V3H2V2H1V1H0z" fill={O} />
        </pattern>
        <pattern id="hatchP" width="8" height="8" patternUnits="userSpaceOnUse">
          <path d="M0 0h1v1h1v1h1v1h1v1h1v1h1v1h1v1h1v1H7V7H6V6H5V5H4V4H3V3H2V2H1V1H0z" fill={P} />
        </pattern>
      </defs>
      <g fill="#00ffff">
        {PADS.map(([x, w]) => <rect key={x} x={x} y={118} width={w} height={450} />)}
        <path d="M251 568h1331v1H251zM480 118h1v620h-1zM1159 118h1v620h-1zM251 681h229v1H251zM1159 681h423v1h-423z" />
        {H_LABELS.map(([t, x, y, s], i) => <text key={i} x={x} y={y} fontSize={s}>{t}</text>)}
        {V_LABELS.map(([t, x]) => (
          <text key={x} transform={`translate(${x} 333) rotate(-90)`} fontSize={35}>{t}</text>
        ))}
      </g>

      {[529, 1091].map((x) => <Metal key={x} x={x} y={625} w={x === 529 ? 19 : 20} h={130} color={P} fill="hatchP" vert />)}
      {[558, 1062].map((x) => <Metal key={x} x={x} y={654} w={x === 558 ? 19 : 20} h={100} color={P} fill="hatchP" vert />)}
      {SS_STRAPS.map(([x, w]) => <Metal key={x} x={x} y={625} w={w} h={130} color={P} fill="hatchP" vert />)}
      {DD_STRAPS.map(([x, w]) => <Metal key={x} x={x} y={654} w={w} h={100} color={P} fill="hatchP" vert />)}
      <Metal x={529} y={624} w={582} h={20} color={O} fill="hatchO" />
      <Metal x={558} y={653} w={524} h={20} color={O} fill="hatchO" />
      <Metal x={529} y={724} w={582} h={9} color={O} fill="hatchO" />

      <g stroke={O}>
        <path d="M530.500 625.500h17v18h-17zM1092.500 625.500h18v18h-18zM559.500 654.500h17v18h-17zM1063.500 654.500h18v18h-18z" />
        {SS_STRAPS.map(([x, w]) => <path key={x} d={`M${x + 1.5} 625.500h${w - 2}v18h${2 - w}zM${x + 1.5} 724v9M${x + w - 0.5} 724v9`} />)}
        {DD_STRAPS.map(([x, w]) => <path key={x} d={`M${x + 1.5} 654.500h${w - 2}v18h${2 - w}z`} />)}
        <path d="M547.500 724v9M1092.500 724v9" />
      </g>
      <g stroke="#d896ff">
        {CELLS.map(([x, y, w, h]) => <rect key={x} x={x + 0.5} y={y + 0.5} width={w} height={h} />)}
      </g>
      <g fontSize={14} fill="#f09a00">
        <text x={821} y={639}>VSS</text>
        <text x={821} y={668}>VDD</text>
      </g>
      <g fontSize={14} fill="#a020f0">
        <text transform="translate(543 692) rotate(-90)">VSS</text>
        <text transform="translate(573 706) rotate(-90)">VDD</text>
        <text transform="translate(1078 706) rotate(-90)">VDD</text>
        <text transform="translate(1107 692) rotate(-90)">VSS</text>
      </g>
    </svg>
  );
}

function CanvasArea() {
  return (
    <div className="flex min-w-0 flex-1 flex-col">
      <div className="flex min-h-0 flex-1">
        <div className="min-w-0 flex-1 overflow-hidden bg-black"><Canvas /></div>
        <div className={`flex w-4 shrink-0 flex-col ${darkDither}`}>
          <button type="button" aria-label="Scroll canvas up" className={`grid h-4 place-items-center ${raised}`}><Tri dir="up" small /></button>
          <span className="flex-[123]" />
          <span className={`flex-[133] ${raised}`} />
          <span className="flex-[332]" />
          <button type="button" aria-label="Scroll canvas down" className={`grid h-4 place-items-center ${raised}`}><Tri small /></button>
        </div>
      </div>
      <div className="flex h-4 shrink-0 pr-4">
        <div className={`flex flex-1 ${darkDither}`}>
          <button type="button" aria-label="Scroll canvas left" className={`grid w-4 place-items-center ${raised}`}><Tri dir="left" small /></button>
          <span className="flex-[410]" />
          <span className={`flex-[562] ${raised}`} />
          <span className="flex-[328]" />
          <button type="button" aria-label="Scroll canvas right" className={`grid w-4 place-items-center ${raised}`}><Tri dir="right" small /></button>
        </div>
      </div>
    </div>
  );
}

/* ---------- desktop task bar ---------- */

const FolderI = ({ home }: { home?: boolean }) => (
  <Ico soft>
    <path d="M.5 14.500v-11l1-2h5l1 2h7.500v11z" fill="#6d9bd0" stroke="#2f5a92" />
    <path d="M1 5.500h14V14H1z" fill="#8db4e2" stroke="#4474b0" strokeWidth=".8" />
    {home && <path d="M2.500 10.500L8 6l5.500 4.500M4.500 10v3.500h2.500v-3h2v3h2.500V10" stroke="#24528c" strokeWidth="1.200" fill="#b8d2f0" />}
  </Ico>
);
const TermI = () => (
  <Ico>
    <path d="M.5.5h15v15H.5z" fill="#8a8e88" stroke="#333" />
    <path d="M2 2h12v11H2z" fill="#2e3430" />
    <path d="M4 5l3 2.500L4 10M8 10.500h4" stroke="#e8f0e8" />
  </Ico>
);
const SchemI = () => (
  <Ico soft>
    <path d="M0 0h16v16H0z" fill="#f4eaf4" />
    <path d="M0 .5h16M.5 0v16M15.500 0v16" stroke="#c080c8" strokeDasharray="1 1" />
    <path d="M1 12h14v3H1z" fill="#b060b8" stroke="#7c2088" strokeDasharray="2 1" />
    <path d="M2 3h3v6H2M6 3h3c3.500 0 3.500 6 0 6H6" stroke="#222" />
    <circle cx="7" cy="5" r="4" stroke="#d81818" strokeWidth="1.500" />
    <path d="M10 8l5 4" stroke="#d81818" strokeWidth="2.500" />
  </Ico>
);

const TASKS: [string, React.ReactNode][] = [
  ["a108", <FolderI home />],
  ["ASIC108", <FolderI />],
  ["icc", <FolderI />],
  ["run", <FolderI />],
  ["a108@tty2:run", <TermI />],
  ["TOP", <SchemI />],
  ["TOP", <ChipIcon />],
];

function TaskBar() {
  return (
    <div className="flex h-[25px] shrink-0 items-center bg-[#edeceb] pl-[3px]">
      <span className="mr-1 h-4 w-[5px] bg-[radial-gradient(circle,#b8b4b0_1px,transparent_1px)] bg-[length:3px_3px]" />
      <div className="flex w-[1364px] min-w-0 gap-[2px]">
        {TASKS.map(([t, icon], i) => (
          <button
            key={i}
            type="button"
            className={
              i === 6
                ? "flex h-[22px] flex-1 items-center gap-[8px] rounded-[3px] border border-[#8c8884] bg-linear-to-b from-[#c2c0be] to-[#d4d2d0] pl-[7px]"
                : "flex h-[22px] flex-1 items-center gap-[8px] rounded-[3px] border border-[#8c8884] bg-linear-to-b from-white to-[#e6e5e4] pl-[6px]"
            }
          >
            {icon}
            {t}
          </button>
        ))}
      </div>
      <div className="ml-auto flex h-[22px] w-[79px] overflow-hidden rounded-[3px] border border-[#a8a4a0] bg-[#a8a4a0]">
        <span className="grid w-[39px] place-items-center border border-t-[#4a78b8] border-r-white border-b-white border-l-white bg-[#cfe0f6]"><ChipIcon /></span>
      </div>
      <svg viewBox="0 0 20 22" className="ml-3 block h-[22px] w-[22px] shrink-0" fill="none" aria-hidden="true">
        <path d="M2 6h17l-1.500 14h-14z" fill="#2f6cc0" stroke="#1c447e" />
        <path d="M1 5h19v4H1z" fill="#5a92d8" stroke="#1c447e" />
        <path d="M3 5l2-3 3 1 2-2 3 2 3-1 2 3-3 2-2-1-3 2-3-2-2 1z" fill="#f2f4f6" stroke="#8a98a8" strokeWidth=".7" />
      </svg>
    </div>
  );
}

const WinBtn = ({ d, label }: { d: string; label: string }) => (
  <button type="button" aria-label={label} className={`grid h-4 w-4 place-items-center ${raised}`}>
    <svg viewBox="0 0 10 10" className="block h-[10px] w-[10px]" fill="none" stroke="#000" shapeRendering="crispEdges" aria-hidden="true"><path d={d} /></svg>
  </button>
);

export default function App() {
  return (
    <div className="flex h-screen flex-col overflow-hidden bg-[#d4d0c8] font-['DejaVu_Sans',sans-serif] text-[12px] leading-4 text-[#111]">
      <header className="flex h-[23px] shrink-0 items-center border-b border-black bg-linear-to-b from-[#585a58] via-[#2e2f2e] via-15% to-[#1c1d1c] px-[6px] shadow-[inset_0_-1px_0_#40506c]">
        <ChipIcon />
        <h1 className="flex-1 text-center text-[12px] font-bold whitespace-pre text-white [text-shadow:1px_1px_0_#000]">
          {"IC Compiler - LayoutWindow.1 - Block Implementation - floorplaned.CEL;1 [write]    Lib:control_pad.mw [write] - [Layout.4]"}
        </h1>
        <svg viewBox="0 0 50 10" className="mr-[2px] block h-[10px] w-[50px]" fill="none" stroke="#c4c4c4" strokeWidth="2" shapeRendering="crispEdges" aria-hidden="true">
          <path d="M0 8h8M21 2h6v6h-6z" />
          <path d="M41 1l7 7M48 1l-7 7" shapeRendering="auto" strokeWidth="2.500" />
        </svg>
      </header>

      <div className="flex min-h-0 flex-1 flex-col border-r border-l-2 border-black">
        <nav className="flex h-5 shrink-0 items-center border-b border-[#686868]">
          <ChipIcon />
          <div className="flex w-[1013px] justify-between pl-[6px]">
            {MENUS.map(([m, u]) => (
              <a key={m} href="#" className="whitespace-nowrap">
                {u < 0 ? m : <>{m.slice(0, u)}<span className="underline underline-offset-2">{m[u]}</span>{m.slice(u + 1)}</>}
              </a>
            ))}
          </div>
          <div className="mr-[3px] mb-[3px] ml-auto flex">
            <WinBtn label="Minimize" d="M1 8h7M1 9h7" />
            <WinBtn label="Restore" d="M3.500 3V.5h6v5H8M3 1.500h6M.5 4.500h6v5h-6zM0 5.500h7" />
            <i className="w-[2px]" />
            <WinBtn label="Close" d="M1 1l8 8M9 1L1 9" />
          </div>
        </nav>

        <ToolRows />

        <main className="flex min-h-0 flex-1">
          <SideBar />
          <ObjectPanel />
          <CanvasArea />
        </main>

        <footer className="flex h-[31px] shrink-0 items-start gap-[2px] border-b-4 border-[#edeceb] pt-[2px]">
          <div className="flex h-[25px] flex-1 items-center border border-t-[#686868] border-r-white border-b-white border-l-[#686868] pl-px whitespace-nowrap">
            Click objects or drag a box to select (Hold Ctrl to add, Shift to remove)
          </div>
          <div className="h-[25px] w-[84px] border border-t-[#686868] border-r-white border-b-white border-l-[#686868]" />
          <div className="flex h-[25px] w-[124px] items-center border border-t-[#686868] border-r-white border-b-white border-l-[#686868] pl-px">248.395, 349.715</div>
          <div className="flex h-[25px] w-[192px] items-center border border-t-[#686868] border-r-white border-b-white border-l-[#686868] pl-[11px]">
            <span className={`h-5 w-[143px] ${sunken}`} />
            <button type="button" aria-label="Message list" className="ml-[10px]">
              <svg viewBox="0 0 17 12" className="block h-3 w-[17px]" shapeRendering="crispEdges" fill="none" aria-hidden="true">
                <path d="M.5.5h10v11H.5zM2 3.500h2M5 3.500h4M2 5.500h2M5 5.500h4M2 7.500h2M5 7.500h4M2 9.500h2M5 9.500h4" stroke="#000" />
                <path d="M12 1v10l5-5z" fill="#000" />
              </svg>
            </button>
          </div>
          <svg viewBox="0 0 14 14" className="mt-[12px] ml-[2px] h-[14px] w-[14px]" stroke="#808080" strokeWidth="1.500" aria-hidden="true">
            <path d="M1 14L14 1M5 14l9-9M9 14l5-5" />
          </svg>
        </footer>
      </div>
      <div className="h-px shrink-0 bg-black" />
      <TaskBar />
      <div className="flex h-1 shrink-0 bg-[#04060c]">
        <i className="ml-12 w-[344px] bg-[#f2f2f2]" />
        <i className="ml-[296px] w-12 bg-[#3a3a40]" />
      </div>
    </div>
  );
}
